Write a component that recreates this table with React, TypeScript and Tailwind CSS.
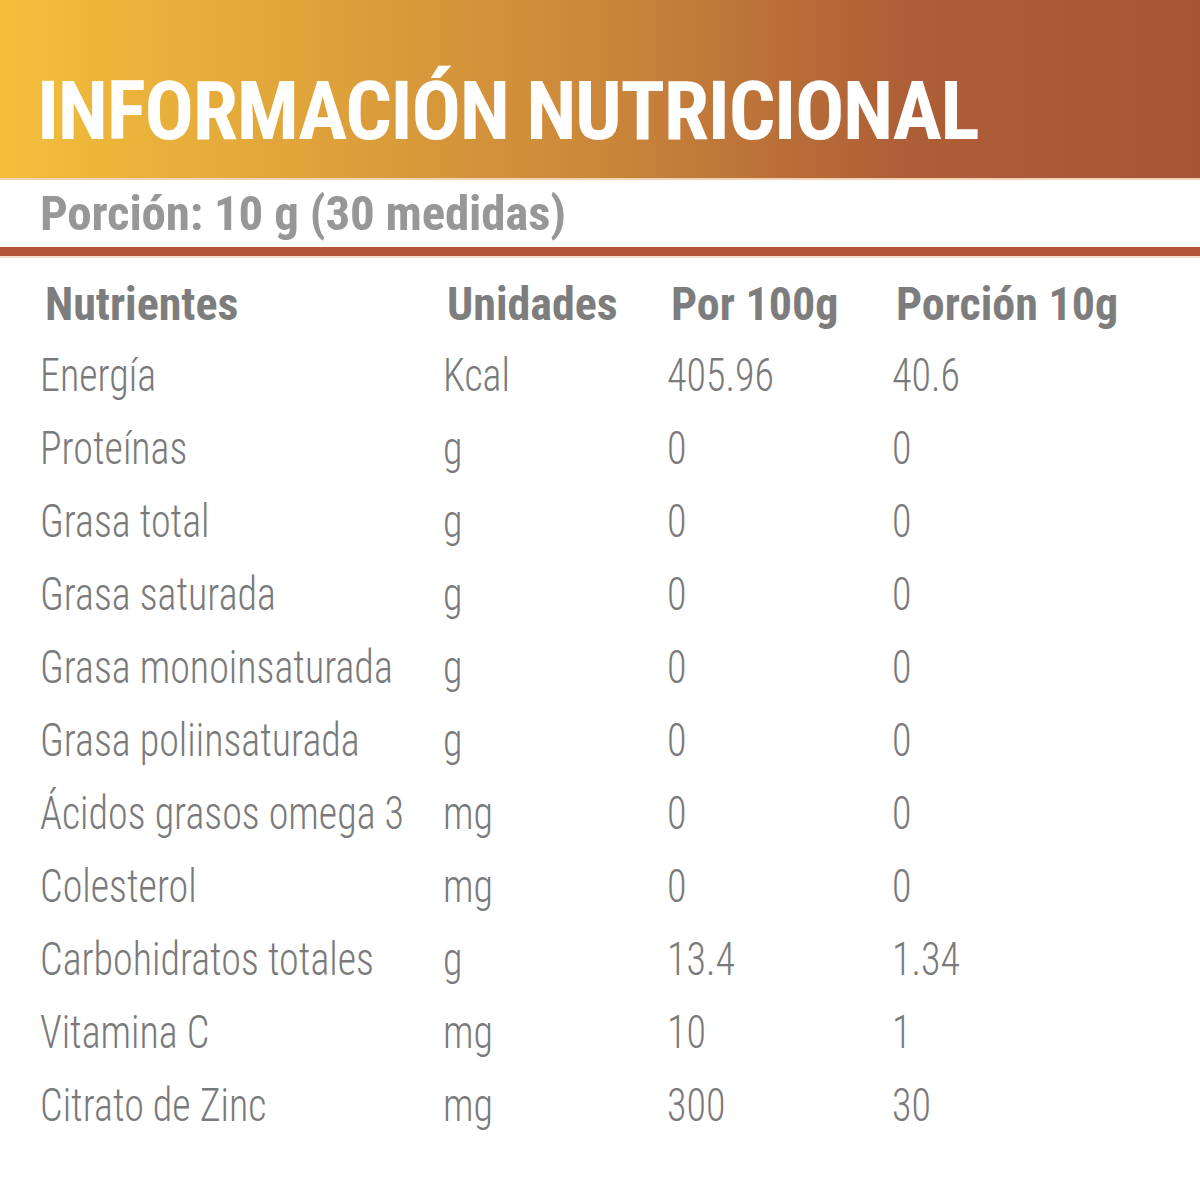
import React from 'react';

interface Row {
  name: string;
  unit: string;
  per100: string;
  portion: string;
}

// Tabla nutricional
const rows: Row[] = [
  { name: "Energía", unit: "Kcal", per100: "405.96", portion: "40.6" },
  { name: "Proteínas", unit: "g", per100: "0", portion: "0" },
  { name: "Grasa total", unit: "g", per100: "0", portion: "0" },
  { name: "Grasa saturada", unit: "g", per100: "0", portion: "0" },
  { name: "Grasa monoinsaturada", unit: "g", per100: "0", portion: "0" },
  { name: "Grasa poliinsaturada", unit: "g", per100: "0", portion: "0" },
  { name: "Ácidos grasos omega 3", unit: "mg", per100: "0", portion: "0" },
  { name: "Colesterol", unit: "mg", per100: "0", portion: "0" },
  { name: "Carbohidratos totales", unit: "g", per100: "13.4", portion: "1.34" },
  { name: "Vitamina C", unit: "mg", per100: "10", portion: "1" },
  { name: "Citrato de Zinc", unit: "mg", per100: "300", portion: "30" },
];

// Light condensed cells: Roboto Condensed squeezed a bit to match the narrow face
const Cell: React.FC<{ children: React.ReactNode }> = ({ children }) => (
  <div className="whitespace-nowrap">
    <span className="inline-block origin-left scale-x-[0.87]">{children}</span>
  </div>
);

const App: React.FC = () => {
  return (
    <div className="min-h-screen w-[1200px] bg-white font-['Roboto_Condensed','Liberation_Sans',sans-serif]">
      {/* Header */}
      <div className="h-[178px] bg-[linear-gradient(90deg,#f3bf3b_0%,#e0a43a_25%,#cb873a_50%,#ae5f37_75%,#a65535_100%)] pl-[37px] pt-[70px]">
        <h1 className="whitespace-nowrap text-[82px] font-bold leading-none tracking-[-1.3px] text-white">
          INFORMACIÓN NUTRICIONAL
        </h1>
      </div>
      <div className="h-[2px] bg-[#f1d2b4]" />

      {/* Porción */}
      <div className="h-[67px] whitespace-nowrap pl-[40px] text-[49px] font-bold leading-[67px] tracking-[-0.2px] text-[#979797]">
        Porción: 10 g (30 medidas)
      </div>
      <div className="h-[9px] bg-[#b3553a]" />
      <div className="h-[2px] bg-[#f3dccb]" />

      {/* Table */}
      <div className="mt-[12px] pl-[40px] text-[46px]">
        <div className="grid grid-cols-[403px_224px_225px_1fr] font-bold leading-[69px] text-[#7d7d7d]">
          <div className="pl-[5px]">Nutrientes</div>
          <div className="pl-[4px]">Unidades</div>
          <div className="pl-[4px]">Por 100g</div>
          <div className="pl-[4px]">Porción 10g</div>
        </div>
        {rows.map((row) => (
          <div
            key={row.name}
            className="grid grid-cols-[403px_224px_225px_1fr] font-light leading-[73px] text-[#7a7a7a]"
          >
            <Cell>{row.name}</Cell>
            <Cell>{row.unit}</Cell>
            <Cell>{row.per100}</Cell>
            <Cell>{row.portion}</Cell>
          </div>
        ))}
      </div>
    </div>
  );
};

export default App;
